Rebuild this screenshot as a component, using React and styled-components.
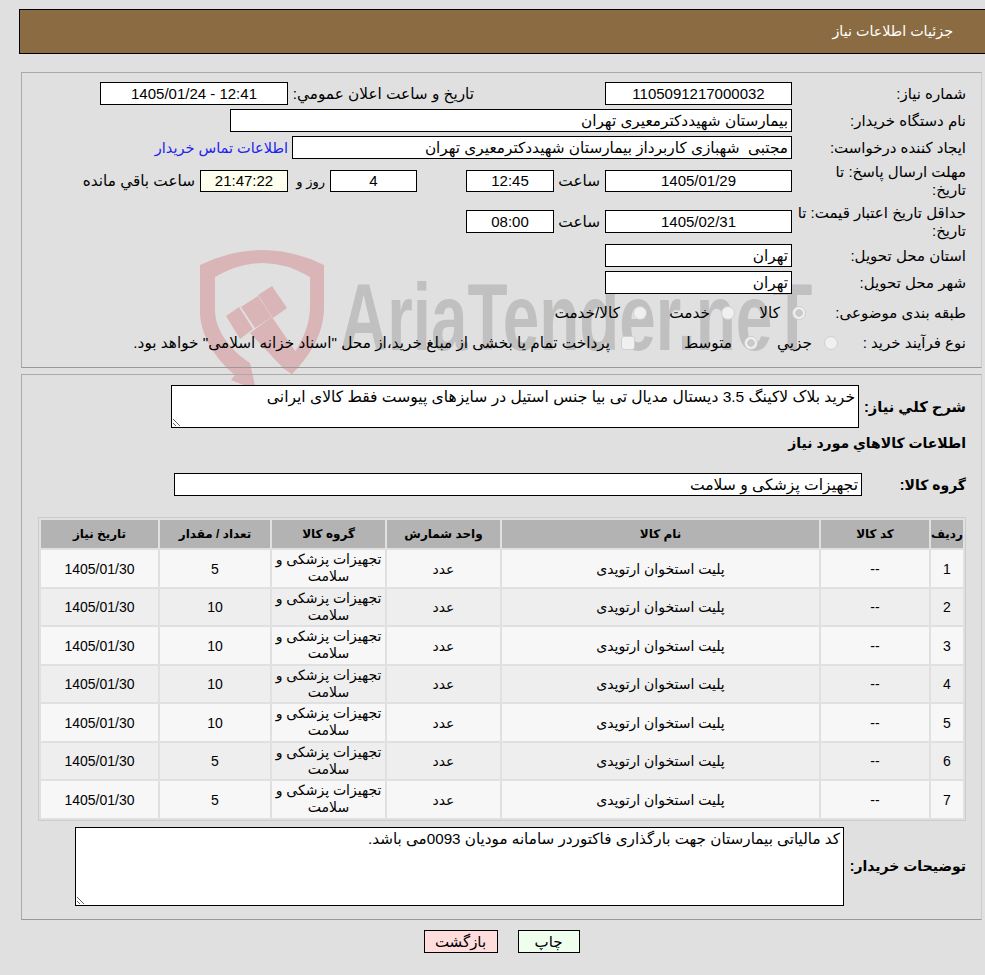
import React from 'react';
import styled, { createGlobalStyle } from 'styled-components';

const GlobalStyle = createGlobalStyle`
  html, body {
    margin: 0;
    padding: 0;
    background: #e0e0e0;
  }
  body {
    font-family: "Liberation Sans", "DejaVu Sans", sans-serif;
    font-size: 15.3px;
    color: #000;
  }
`;

const Page = styled.div`
  position: relative;
  width: 985px;
  height: 975px;
  overflow: hidden;
  direction: rtl;
  padding: 9px 0 0;
  box-sizing: border-box;
`;

const Watermark = styled.div`
  position: absolute;
  left: 198px;
  top: 250px;
  width: 620px;
  height: 150px;
  direction: ltr;
`;

const WatermarkText = styled.span`
  position: absolute;
  left: 142px;
  top: 17px;
  font-family: "Liberation Sans", sans-serif;
  font-weight: 700;
  font-size: 95px;
  line-height: 100px;
  color: #c0c0c0;
  white-space: nowrap;
  transform: scaleX(0.69);
  transform-origin: left top;
`;

const Content = styled.div`
  position: relative;
`;

const Header = styled.div`
  margin: 0 0 0 19px;
  height: 43px;
  background: #8b6c42;
  border: 1px solid #000;
  border-right: 0;
  color: #fff;
  font-size: 14.3px;
  line-height: 43px;
  padding-right: 32px;
`;

const Panel = styled.div`
  margin: ${(p) => p.$top}px 3px 0 21px;
  height: ${(p) => p.$height}px;
  box-sizing: border-box;
  border: 1px solid #aaa;
  border-right-color: #ccc;
  border-bottom-color: #999;
  padding: ${(p) => p.$pad};
`;

const Row = styled.div`
  display: flex;
  align-items: center;
  height: ${(p) => p.$h}px;
  margin-top: ${(p) => p.$mt || 0}px;
  margin-bottom: ${(p) => p.$mb || 0}px;
`;

const Label = styled.div`
  width: 174px;
  flex: none;
  font-size: 15px;
  line-height: 18px;
`;

const BoldLabel = styled.div`
  flex: none;
  font-size: ${(p) => p.$fs || 14}px;
  font-weight: 700;
  width: ${(p) => p.$w}px;
`;

const Box = styled.div`
  box-sizing: border-box;
  width: ${(p) => p.$w}px;
  height: ${(p) => p.$h || 23}px;
  flex: none;
  background: ${(p) => p.$bg || '#fff'};
  border: 1px solid #000;
  font-size: ${(p) => p.$fs || (p.$start ? 15.3 : 15)}px;
  text-align: ${(p) => (p.$start ? 'right' : 'center')};
  padding: 0 ${(p) => (p.$start ? 3 : 0)}px;
  line-height: ${(p) => (p.$h || 23) - 2}px;
  white-space: pre;
`;

const Text = styled.span`
  flex: none;
  width: ${(p) => p.$w}px;
  margin-right: ${(p) => p.$mr || 0}px;
  font-size: ${(p) => p.$fs || 15.3}px;
  white-space: nowrap;
`;

const Link = styled.a`
  flex: none;
  margin-right: 4px;
  font-size: 14.5px;
  color: #2222ee;
  white-space: nowrap;
`;

const Spacer = styled.div`
  flex: none;
  width: ${(p) => p.$w}px;
`;

const Choice = styled.span`
  flex: none;
  width: ${(p) => p.$w}px;
  white-space: nowrap;
`;

const Radio = styled.span`
  flex: none;
  box-sizing: border-box;
  width: 14px;
  height: 14px;
  margin-right: ${(p) => p.$mr || 0}px;
  margin-left: ${(p) => p.$gap}px;
  border-radius: ${(p) => (p.$square ? '3px' : '50%')};
  border: 1px solid #cfcfcf;
  background: ${(p) => (p.$on ? 'radial-gradient(circle, #c9c9c9 0 3.5px, #efefef 4px)' : '#f0f0f0')};
`;

const Area = styled.textarea`
  display: block;
  box-sizing: border-box;
  flex: none;
  width: ${(p) => p.$w}px;
  height: ${(p) => p.$h}px;
  margin: 0;
  padding: 2px 3px;
  background: #fff;
  border: 1px solid #000;
  font-family: inherit;
  font-size: ${(p) => p.$fs}px;
  line-height: 17px;
  color: #000;
  direction: rtl;
  outline: none;
`;

const Table = styled.table`
  width: 927px;
  margin: 21px 0 0 0;
  border: 1px solid #ccc;
  border-collapse: separate;
  border-spacing: 2px;
  table-layout: fixed;
`;

const Th = styled.th`
  height: 28px;
  padding: 0;
  background: #b3b3b3;
  font-size: 12px;
  font-weight: 700;
  text-align: center;
`;

const Td = styled.td`
  height: 36.5px;
  padding: ${(p) => (p.$tight ? 0 : '2px')} 0 0;
  box-sizing: border-box;
  background: ${(p) => (p.$even ? '#eeeeee' : '#f7f7f7')};
  font-size: 14px;
  line-height: 17px;
  text-align: center;
`;

const Buttons = styled.div`
  display: flex;
  justify-content: center;
  gap: 20px;
  margin: 10px 0 0 18px;
`;

const Button = styled.button`
  box-sizing: border-box;
  width: ${(p) => p.$w}px;
  height: 23px;
  padding: 0;
  background: ${(p) => p.$bg};
  border: 1px solid #000;
  font-family: inherit;
  font-size: 15px;
  color: #000;
`;

const columns = [
  ['ردیف', 32],
  ['کد کالا', 108],
  ['نام کالا', 317],
  ['واحد شمارش', 113],
  ['گروه کالا', 113],
  ['تعداد / مقدار', 110],
  ['تاریخ نیاز', 117],
];

const items = [5, 10, 10, 10, 10, 5, 5];

const App = () => (
  <Page>
    <GlobalStyle />
    <Watermark>
      <svg width="130" height="150" viewBox="0 0 130 150">
        <path
          fill="#d9b5b7"
          d="M2 15 Q65 -15 126 15 L126 58 C126 85 110 108 94 124 L85 118 C100 100 112 80 112 56 L112 27 Q65 -1 17 27 L17 60 C17 80 32 100 52 113 L58 140 L33 130 L37 125 C18 110 2 85 2 62 Z"
        />
        <path fill="#d9b5b7" d="M52 83 L74 67 L102 108 L94 124 L85 118 Z" />
        <path fill="#d9b5b7" d="M28 66 L41 57 L55 79 L42 89 Z" />
        <path fill="#d9b5b7" d="M43 57 L60 46 L74 67 L57 78 Z" />
        <path fill="#d9b5b7" d="M60 45 L74 36 L89 58 L75 68 Z" />
      </svg>
      <WatermarkText>AriaTender.neT</WatermarkText>
    </Watermark>
    <Content>
      <Header>جزئیات اطلاعات نیاز</Header>
      <Panel $top={18} $height={296} $pad="9px 15px 0 0">
        <Row $h={23} $mb={4}>
          <Label>شماره نیاز:</Label>
          <Box $w={187}>1105091217000032</Box>
          <Spacer $w={131} />
          <Text $w={186}>تاریخ و ساعت اعلان عمومي:</Text>
          <Box $w={188}>12:41 - 1405/01/24</Box>
        </Row>
        <Row $h={23} $mb={4}>
          <Label>نام دستگاه خریدار:</Label>
          <Box $w={562} $start>بیمارستان شهیددکترمعیری تهران</Box>
        </Row>
        <Row $h={23} $mb={11}>
          <Label>ایجاد کننده درخواست:</Label>
          <Box $w={500} $start>مجتبی  شهبازی کاربرداز بیمارستان شهیددکترمعیری تهران</Box>
          <Link>اطلاعات تماس خریدار</Link>
        </Row>
        <Row $h={22} $mb={18}>
          <Label>مهلت ارسال پاسخ: تا<br />تاریخ:</Label>
          <Box $w={187} $h={22}>1405/01/29</Box>
          <Text $w={46} $mr={5}>ساعت</Text>
          <Box $w={88} $h={22}>12:45</Box>
          <Spacer $w={49} />
          <Box $w={87} $h={22}>4</Box>
          <Text $w={37} $mr={5} $fs={13}>روز و</Text>
          <Box $w={88} $h={22} $bg="#ffffee">21:47:22</Box>
          <Text $w={113} $mr={5}>ساعت باقي مانده</Text>
        </Row>
        <Row $h={23} $mb={11}>
          <Label>حداقل تاریخ اعتبار قیمت: تا<br />تاریخ:</Label>
          <Box $w={187}>1405/02/31</Box>
          <Text $w={46} $mr={5}>ساعت</Text>
          <Box $w={88}>08:00</Box>
        </Row>
        <Row $h={23} $mb={4}>
          <Label>استان محل تحویل:</Label>
          <Box $w={187} $start>تهران</Box>
        </Row>
        <Row $h={23} $mb={8}>
          <Label>شهر محل تحویل:</Label>
          <Box $w={187} $start>تهران</Box>
        </Row>
        <Row $h={22} $mb={8}>
          <Label>طبقه بندی موضوعی:</Label>
          <Radio $on $mr={-14} $gap={12} />
          <Choice $w={45}>کالا</Choice>
          <Radio $gap={11} />
          <Choice $w={63}>خدمت</Choice>
          <Radio $gap={13} />
          <Choice>کالا/خدمت</Choice>
        </Row>
        <Row $h={22}>
          <Label>نوع فرآیند خرید :</Label>
          <Radio $mr={-46} $gap={12} />
          <Choice $w={54}>جزيي</Choice>
          <Radio $on $gap={12} />
          <Choice $w={97}>متوسط</Choice>
          <Radio $square $gap={11} />
          <Choice>پرداخت تمام یا بخشی از مبلغ خرید،از محل "اسناد خزانه اسلامی" خواهد بود.</Choice>
        </Row>
      </Panel>
      <Panel $top={6} $height={546} $pad="10px 15px 0 0">
        <Row $h={43}>
          <BoldLabel $w={107} $fs={14.7}>شرح کلي نیاز:</BoldLabel>
          <Area
            $w={688}
            $h={43}
            $fs={15.55}
            readOnly
            defaultValue="خرید بلاک لاکینگ 3.5 دیستال مدیال تی بیا جنس استیل در سایزهای پیوست فقط کالای ایرانی"
          />
        </Row>
        <Row $h={30} $mb={15}>
          <BoldLabel>اطلاعات کالاهاي مورد نیاز</BoldLabel>
        </Row>
        <Row $h={23}>
          <BoldLabel $w={104}>گروه کالا:</BoldLabel>
          <Box $w={688} $start $fs={15.6}>تجهیزات پزشکی و سلامت</Box>
        </Row>
        <Table>
          <colgroup>
            {columns.map(([name, width]) => (
              <col key={name} style={{ width }} />
            ))}
          </colgroup>
          <thead>
            <tr>
              {columns.map(([name]) => (
                <Th key={name}>{name}</Th>
              ))}
            </tr>
          </thead>
          <tbody>
            {items.map((qty, i) => (
              <tr key={i}>
                <Td $even={i % 2 === 1}>{i + 1}</Td>
                <Td $even={i % 2 === 1}>--</Td>
                <Td $even={i % 2 === 1}>پلیت استخوان ارتوپدی</Td>
                <Td $even={i % 2 === 1}>عدد</Td>
                <Td $even={i % 2 === 1} $tight>تجهیزات پزشکی و سلامت</Td>
                <Td $even={i % 2 === 1}>{qty}</Td>
                <Td $even={i % 2 === 1}>1405/01/30</Td>
              </tr>
            ))}
          </tbody>
        </Table>
        <Row $h={79} $mt={6}>
          <BoldLabel $w={122}>توضیحات خریدار:</BoldLabel>
          <Area
            $w={769}
            $h={79}
            $fs={15.2}
            readOnly
            defaultValue="کد مالیاتی بیمارستان جهت بارگذاری فاکتوردر سامانه مودیان 0093می باشد."
          />
        </Row>
      </Panel>
      <Buttons>
        <Button $w={62} $bg="#eeffee">چاپ</Button>
        <Button $w={74} $bg="#ffdddd">بازگشت</Button>
      </Buttons>
    </Content>
  </Page>
);

export default App;
